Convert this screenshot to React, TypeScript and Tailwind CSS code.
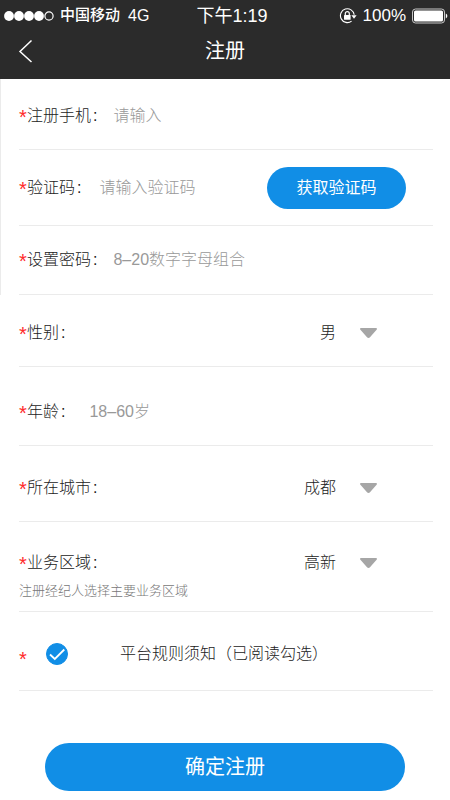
import { useState } from "react";
import type { ReactNode } from "react";

const StatusBar = () => (
  <div className="grid grid-cols-[1fr_auto_1fr] items-center h-[31px] pl-1 pr-0.5">
    <div className="flex items-center">
      <svg className="w-[50px] h-3" viewBox="0 0 50 12" fill="white" aria-hidden="true">
        <circle cx="5" cy="6" r="4.9" />
        <circle cx="15" cy="6" r="4.9" />
        <circle cx="25" cy="6" r="4.9" />
        <circle cx="35" cy="6" r="4.9" />
        <circle cx="45" cy="6" r="4.1" fill="none" stroke="white" strokeWidth="1.2" />
      </svg>
      <span className="ml-1.5 text-[15px] font-medium">中国移动</span>
      <span className="ml-2 text-base">4G</span>
    </div>
    <div className="pl-3 text-lg leading-6">下午1:19</div>
    <div className="flex items-center justify-end">
      <svg className="w-[18px] h-4" viewBox="0 0 18 16" fill="none" aria-hidden="true">
        <path d="M12.6 13.1A6.9 6.9 0 1 1 15.2 6.8" stroke="white" strokeWidth="1.1" />
        <path d="M12.4 7.2h5.2L15 10.8z" fill="white" />
        <rect x="5" y="7" width="6.6" height="4.8" rx="0.5" fill="white" />
        <path d="M6.3 7.2V5.6a2 2 0 0 1 4 0v1.6" stroke="white" strokeWidth="1.2" />
      </svg>
      <span className="ml-1.5 text-[17px] leading-6">100%</span>
      <svg className="ml-1.5 w-9 h-4" viewBox="0 0 36 16" fill="none" aria-hidden="true">
        <rect x="0.5" y="1" width="32" height="14" rx="3" stroke="#c8c8c8" />
        <rect x="2" y="2.5" width="29" height="11" rx="1.6" fill="white" />
        <path d="M33.8 5.6c2 .7 2 4.1 0 4.8z" fill="white" />
      </svg>
    </div>
  </div>
);

const Asterisk = () => (
  <span className="inline-block w-2 text-xl leading-5 align-[-3px] text-[#ff2a2a]">*</span>
);

const Label = ({ id, children }: { id: string; children: ReactNode }) => (
  <label htmlFor={id} className="shrink-0 whitespace-nowrap">
    <Asterisk />
    {children}
    <span className="ml-0.5">:</span>
  </label>
);

const inputClass =
  "flex-1 min-w-0 bg-transparent outline-none placeholder:text-[#999999] placeholder:opacity-100";

const SelectField = ({ id, label, options }: { id: string; label: string; options: string[] }) => (
  <div className="flex items-center justify-between pr-14">
    <Label id={id}>{label}</Label>
    <div className="relative">
      <select
        id={id}
        className="appearance-none bg-transparent outline-none w-24 pr-[41px] [text-align-last:right]"
      >
        {options.map((option) => (
          <option key={option}>{option}</option>
        ))}
      </select>
      <svg
        className="absolute right-0 top-1/2 -translate-y-1/2 w-[17px] h-2.5 pointer-events-none"
        viewBox="0 0 17 10"
        fill="#a6a6a6"
        aria-hidden="true"
      >
        <path d="M1 0h15c1 0 1.3 1 .6 1.7L10.2 9c-1 1.2-2.4 1.2-3.4 0L.4 1.700C-.3 1 0 0 1 0z" />
      </svg>
    </div>
  </div>
);

const App = () => {
  const [agreed, setAgreed] = useState(true);

  return (
    <div className="min-h-screen bg-white text-[#222222] font-light font-['Liberation_Sans','Noto_Sans_CJK_SC',sans-serif]">
      <header className="bg-[#2b2b2b] text-white font-normal">
        <StatusBar />
        <div className="grid grid-cols-3 items-center h-12 pb-2 px-[18px]">
          <button type="button" aria-label="返回" className="justify-self-start">
            <svg className="w-4 h-6" viewBox="0 0 16 24" fill="none" stroke="white" strokeWidth="1.5">
              <path d="M13.5 1.5L2 12.5l11.5 10.5" />
            </svg>
          </button>
          <h1 className="text-xl text-center">注册</h1>
        </div>
      </header>

      <form onSubmit={(e) => e.preventDefault()} className="text-base leading-6">
        <div className="border-l border-[#ebebeb] pl-[18px] pr-[17px]">
          <div className="flex items-center gap-4 h-[71px] pt-1 border-b border-[#ebebeb]">
            <Label id="phone">注册手机</Label>
            <input id="phone" type="tel" placeholder="请输入" className={inputClass} />
          </div>
          <div className="flex items-center gap-[18px] h-[76px] pr-[27px] border-b border-[#ebebeb]">
            <Label id="code">验证码</Label>
            <input id="code" type="text" placeholder="请输入验证码" className={inputClass} />
            <button
              type="button"
              className="shrink-0 w-[139px] h-[42px] rounded-full bg-[#118ee6] text-white font-normal"
            >
              获取验证码
            </button>
          </div>
          <div className="flex items-center gap-4 h-[69px] border-b border-[#ebebeb]">
            <Label id="password">设置密码</Label>
            <input id="password" type="password" placeholder="8–20数字字母组合" className={inputClass} />
          </div>
        </div>

        <div className="pl-[19px] pr-[17px]">
          <div className="flex flex-col justify-center h-[72px] pt-1 border-b border-[#ebebeb]">
            <SelectField id="gender" label="性别" options={["男", "女"]} />
          </div>
          <div className="flex items-center gap-6 h-[79px] pt-3 border-b border-[#ebebeb]">
            <Label id="age">年龄</Label>
            <input id="age" type="text" inputMode="numeric" placeholder="18–60岁" className={inputClass} />
          </div>
          <div className="flex flex-col justify-center h-[76px] pt-2 border-b border-[#ebebeb]">
            <SelectField id="city" label="所在城市" options={["成都"]} />
          </div>
          <div className="flex flex-col justify-center h-[90px] pt-5 border-b border-[#ebebeb] gap-1">
            <SelectField id="area" label="业务区域" options={["高新"]} />
            <p className="text-[13px] text-[#777777]">注册经纪人选择主要业务区域</p>
          </div>
          <label className="flex items-center h-[79px] pt-1.5 border-b border-[#ebebeb]">
            <span className="pt-2">
              <Asterisk />
            </span>
            <span className="relative w-[22px] h-[22px] ml-[19px]">
              <input
                type="checkbox"
                checked={agreed}
                onChange={(e) => setAgreed(e.target.checked)}
                className="block appearance-none w-full h-full rounded-full border border-[#118ee6] checked:bg-[#118ee6]"
              />
              <svg
                className="absolute inset-0 pointer-events-none"
                viewBox="0 0 22 22"
                fill="none"
                stroke="white"
                strokeWidth="1.8"
                aria-hidden="true"
              >
                <path d="M4 11.5l4.8 4.5L18.3 6.5" />
              </svg>
            </span>
            <span className="ml-[52px]">平台规则须知（已阅读勾选）</span>
          </label>
        </div>

        <div className="px-[45px] pt-[52px] pb-2">
          <button
            type="submit"
            className="w-full h-12 rounded-full bg-[#118ee6] text-white text-xl font-normal"
          >
            确定注册
          </button>
        </div>
      </form>
    </div>
  );
};

export default App;
